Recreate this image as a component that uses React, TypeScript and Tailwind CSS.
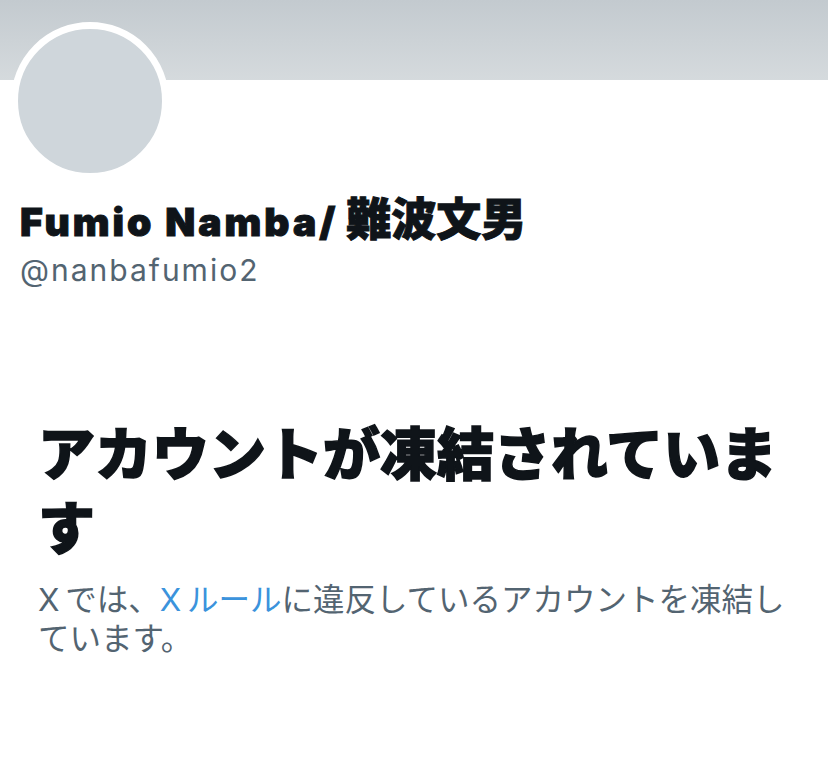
import React from "react";

export default function App() {
  const font = { fontFamily: '"Inter", "Noto Sans CJK JP", sans-serif' };
  return (
    <div className="w-[828px] h-[761px] bg-white overflow-hidden" style={font}>
      <div className="h-[80px] bg-gradient-to-b from-[#c3cacf] to-[#d5dadd]" />
      <div className="px-[11px]">
        <div className="-mt-[58px] w-[158px] h-[158px] rounded-full border-[7px] border-white bg-[#cfd6db]" />
      </div>
      <div className="px-[20px] mt-[16px]">
        <div className="h-[48px] leading-[48px] font-black text-[#0f1419] whitespace-nowrap">
          <span className="text-[39px] tracking-[3px] [-webkit-text-stroke:1px_#0f1419]">Fumio Namba/</span>
          <span className="ml-[8px] text-[45px] [-webkit-text-stroke:1px_#0f1419]">難波文男</span>
        </div>
        <div className="text-[30px] leading-[36px] tracking-[2px] text-[#536471] mt-[8px]">@nanbafumio2</div>
      </div>
      <div className="pl-[38px] pr-[20px] mt-[130px]">
        <h1 className="text-[57px] leading-[74px] font-black text-[#0f1419] [-webkit-text-stroke:1.5px_#0f1419]">
          アカウントが凍結されています
        </h1>
        <p className="mt-[14px] text-[31.5px] leading-[39px] text-[#536471]">
          {"X\u2009では、"}
          <span className="text-[#3b93dc]">{"X\u2009ルール"}</span>
          に違反しているアカウントを凍結しています。
        </p>
      </div>
    </div>
  );
}
